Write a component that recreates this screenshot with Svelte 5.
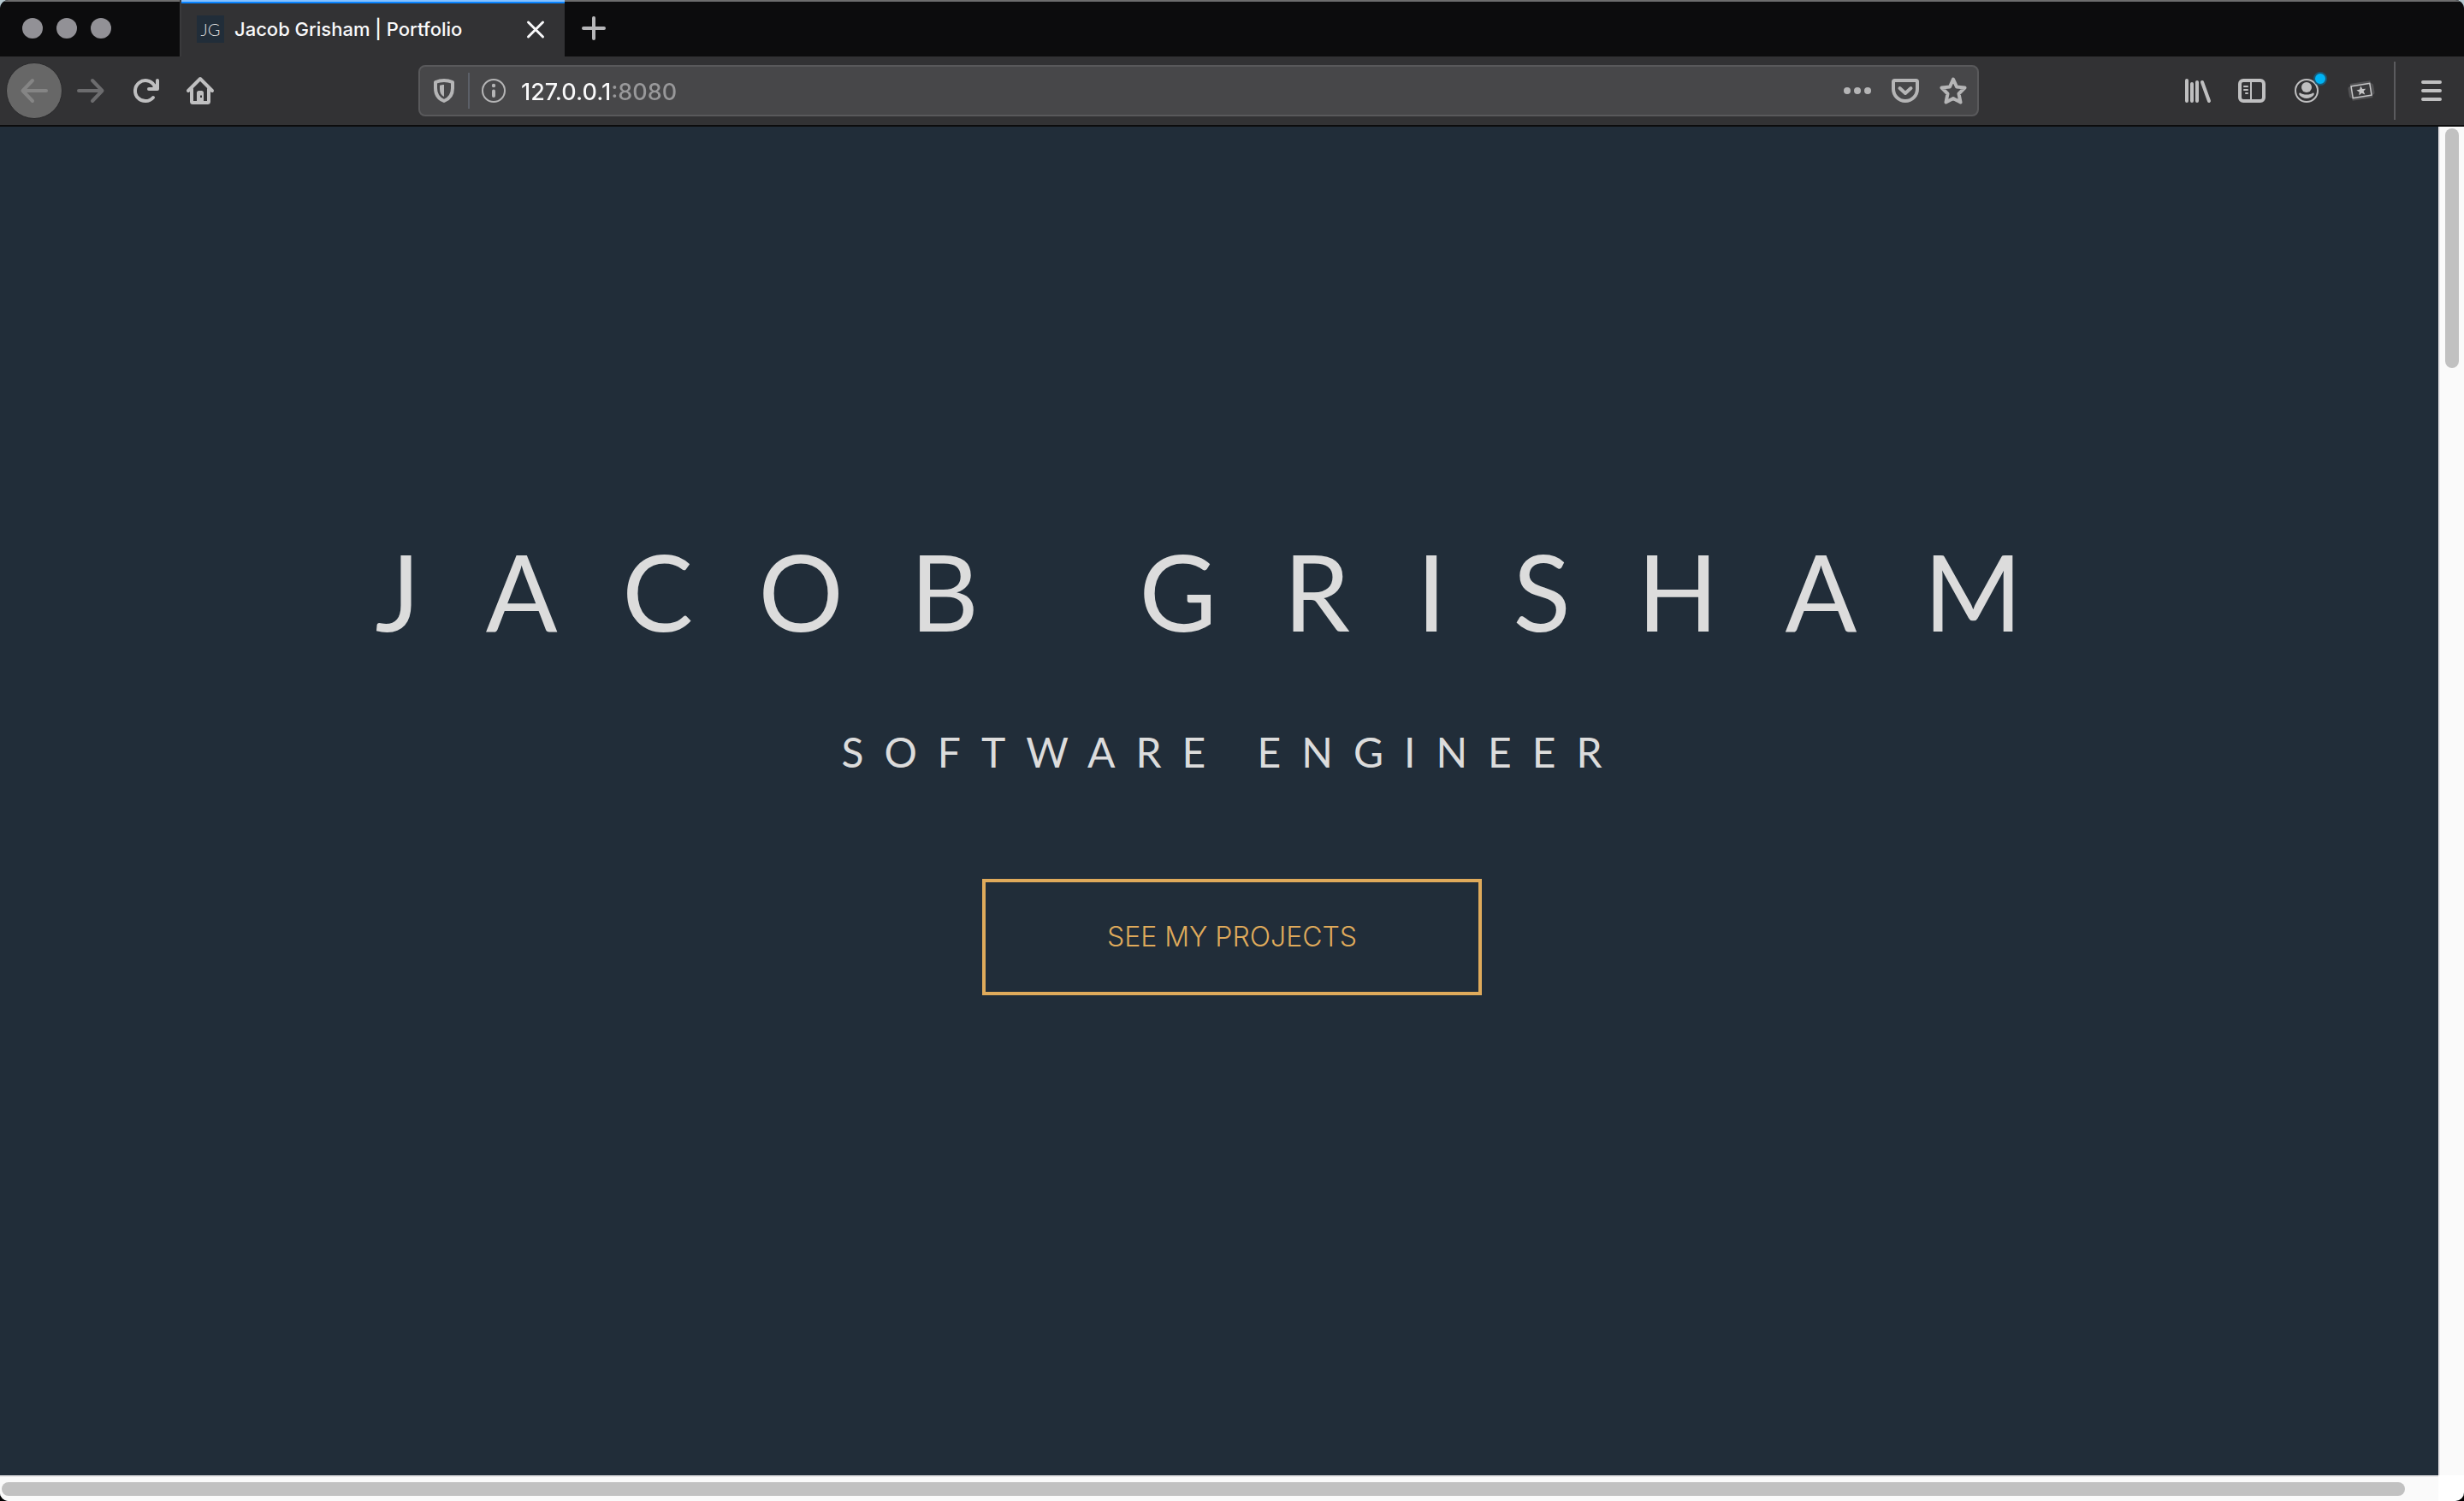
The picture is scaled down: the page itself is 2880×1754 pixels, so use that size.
<script>
  const address = '127.0.0.1:8080';
  const scrolled = { vertical: 17.8, horizontal: 98.7 };
</script>

<div class="window">
  <header class="tabs">
    <div class="lights">
      <button class="light" aria-label="Close window"></button>
      <button class="light" aria-label="Minimize window"></button>
      <button class="light" aria-label="Zoom window"></button>
    </div>
    <div class="tab">
      <span class="favicon">JG</span>
      <span class="tab-title">Jacob Grisham | Portfolio</span>
      <button class="tab-close" aria-label="Close tab">
        <svg class="icon" viewBox="0 0 32 32" fill="none" stroke="currentColor" stroke-width="3" stroke-linecap="round">
          <path d="M7.500 8 24.500 25M24.500 8 7.500 25" />
        </svg>
      </button>
    </div>
    <button class="new-tab" aria-label="New tab">
      <svg class="icon" viewBox="0 0 32 32" fill="none" stroke="currentColor" stroke-width="4" stroke-linecap="round">
        <path d="M16 4V28M4 16H28" />
      </svg>
    </button>
  </header>

  <nav class="toolbar" aria-label="Browser">
    <div class="group">
      <button class="tool back" aria-label="Back" disabled>
        <svg class="icon" viewBox="0 0 32 32" fill="none" stroke="currentColor" stroke-width="4" stroke-linecap="round" stroke-linejoin="round">
          <path d="M30 16H3M14 4 2.500 16 14 28" />
        </svg>
      </button>
      <button class="tool dim" aria-label="Forward" disabled>
        <svg class="icon" viewBox="0 0 32 32" fill="none" stroke="currentColor" stroke-width="4" stroke-linecap="round" stroke-linejoin="round">
          <path d="M2 16H29M18 4 29.500 16 18 28" />
        </svg>
      </button>
      <button class="tool" aria-label="Reload">
        <svg class="icon" viewBox="0 0 32 32" fill="none" stroke="currentColor" stroke-width="4" stroke-linecap="round" stroke-linejoin="round">
          <path d="M25 24A12 12 0 1 1 26 9.500" />
          <path d="M30 4V14H20" />
          <path d="M30 6 22 14H30Z" fill="currentColor" stroke="none" />
        </svg>
      </button>
      <button class="tool" aria-label="Home">
        <svg class="icon" viewBox="0 0 32 32" fill="none" stroke="currentColor" stroke-width="4" stroke-linecap="round" stroke-linejoin="round">
          <path d="M2 16 16 2 30 16" />
          <path d="M6 14V28.500Q6 30 7.500 30H24.500Q26 30 26 28.500V14" />
          <path d="M12 30V18.500Q12 16 14.500 16H17.500Q20 16 20 18.500V30ZM16 21.500V24H18V21.500Z" fill="currentColor" fill-rule="evenodd" stroke="none" />
        </svg>
      </button>
    </div>

    <div class="address">
      <button class="shield" aria-label="Tracking protection">
        <svg class="icon" viewBox="0 0 32 32" fill="none" stroke="currentColor" stroke-width="4" stroke-linejoin="round">
          <path d="M16 4C19 4 23 4.800 26 6V13C26 21 22.500 25.500 16 28C9.500 25.500 6 21 6 13V6C9 4.800 13 4 16 4Z" />
          <path d="M16 9C14 9 12.500 9.300 11 9.800V14C11 18.500 12.500 21.200 16 23Z" fill="currentColor" stroke="none" />
        </svg>
      </button>
      <span class="divider short"></span>
      <button class="info" aria-label="Site information">
        <svg class="icon" viewBox="0 0 32 32" fill="none" stroke="currentColor">
          <circle cx="16" cy="16" r="13" stroke-width="2" />
          <path d="M16 16.500V22" stroke-width="4" stroke-linecap="round" />
          <circle cx="16" cy="10" r="2.200" fill="currentColor" stroke="none" />
        </svg>
      </button>
      <input class="url" type="text" aria-label="Address" value={address} />
      <button class="action" aria-label="Page actions">
        <svg class="icon" viewBox="0 0 32 32" fill="currentColor">
          <circle cx="4" cy="16" r="4" /><circle cx="16" cy="16" r="4" /><circle cx="28" cy="16" r="4" />
        </svg>
      </button>
      <button class="action" aria-label="Save to Pocket">
        <svg class="icon" viewBox="0 0 32 32" fill="none" stroke="currentColor" stroke-width="4" stroke-linecap="round" stroke-linejoin="round">
          <path d="M3.500 4H28.500Q30 4 30 5.500V14A14 14 0 0 1 2 14V5.500Q2 4 3.500 4Z" />
          <path d="M9.500 13 16 19 22.500 13" />
        </svg>
      </button>
      <button class="action" aria-label="Bookmark this page">
        <svg class="icon" viewBox="0 0 32 32" fill="none" stroke="currentColor" stroke-width="4" stroke-linejoin="round">
          <path d="M16 2.500 20 11.500 29.500 12.500 22.500 19.500 24.500 29.500 16 25 7.500 29.500 9.500 19.500 2.500 12.500 12 11.500Z" />
        </svg>
      </button>
    </div>

    <div class="group">
      <button class="tool" aria-label="Library">
        <svg class="icon" viewBox="0 0 32 32" fill="none" stroke="currentColor" stroke-width="4" stroke-linecap="round">
          <path d="M4 4V28M10 8V28M16 6V28M22 6 30 28" />
        </svg>
      </button>
      <button class="tool" aria-label="Sidebars">
        <svg class="icon" viewBox="0 0 32 32" fill="none" stroke="currentColor">
          <rect x="2" y="4" width="28" height="24" rx="4" stroke-width="4" />
          <path d="M15 5V27" stroke-width="2" />
          <path d="M7 11H11M7 15H11M9 19H11" stroke-width="2" stroke-linecap="round" />
        </svg>
      </button>
      <button class="tool" aria-label="Account">
        <svg class="icon" viewBox="0 0 32 32" fill="currentColor">
          <circle cx="16" cy="16" r="13" fill="none" stroke="currentColor" stroke-width="2" />
          <circle cx="16" cy="12" r="6" />
          <path d="M8.500 18.500C10.500 20 13 20.500 16 20.500S21.500 20 23.500 18.500C25 18.300 25.200 20 24 21.500A11 11 0 0 1 8 21.500C6.800 20 7 18.300 8.500 18.500Z" />
        </svg>
        <span class="badge"></span>
      </button>
      <button class="tool" aria-label="Tickets">
        <svg class="icon" viewBox="0 0 32 32">
          <g transform="rotate(-9 16 16)">
            <path d="M4 6H28V9Q31 9 31 12V20Q31 23 28 23V26H4V23Q1 23 1 20V12Q1 9 4 9Z" fill="#515153" />
            <rect x="5" y="9" width="22" height="14" fill="#3a3a3c" stroke="#c6c6c7" stroke-width="1.500" />
            <path d="M16 10.500 17.600 14.300 21.500 14.500 18.500 17 19.500 21 16 18.800 12.500 21 13.500 17 10.500 14.500 14.400 14.300Z" fill="#c6c6c7" />
          </g>
        </svg>
      </button>
      <span class="divider tall"></span>
      <button class="tool" aria-label="Open menu">
        <svg class="icon" viewBox="0 0 32 32" fill="none" stroke="currentColor" stroke-width="4" stroke-linecap="round">
          <path d="M6 6H26M6 16H26M6 26H26" />
        </svg>
      </button>
    </div>
  </nav>

  <div class="viewport">
    <main class="page">
      <div class="hero">
        <h1>JACOB GRISHAM</h1>
        <h2>SOFTWARE ENGINEER</h2>
        <a class="cta" href="#projects">SEE MY PROJECTS</a>
      </div>
    </main>
    <div class="track vertical"><div class="thumb" style="height: {scrolled.vertical}%"></div></div>
    <div class="track horizontal"><div class="thumb" style="width: {scrolled.horizontal}%"></div></div>
    <div class="corner"></div>
  </div>
</div>

<style>
  :global(body) {
    background: linear-gradient(#b5c8cf 50%, #000 50%);
  }

  .window {
    display: flex;
    flex-direction: column;
    min-height: 100vh;
    overflow: hidden;
    border-radius: 10px;
    background: #212d39;
    font-family: Inter, 'Liberation Sans', sans-serif;
  }

  button {
    display: flex;
    align-items: center;
    justify-content: center;
    flex: none;
    margin: 0;
    padding: 0;
    border: 0;
    background: none;
    color: inherit;
  }

  .icon {
    display: block;
    width: 32px;
    height: 32px;
    overflow: visible;
  }

  .tabs {
    display: flex;
    height: 66px;
    box-sizing: border-box;
    background: #0c0c0d;
    box-shadow: inset 0 2px #6d6d6d;
  }

  .lights {
    display: flex;
    align-items: center;
    gap: 16px;
    width: 210px;
    padding-left: 26px;
    box-sizing: border-box;
  }

  .light {
    width: 24px;
    height: 24px;
    border-radius: 50%;
    background: #929196;
  }

  .tab {
    display: flex;
    align-items: center;
    width: 450px;
    padding: 2px 18px 0 18px;
    box-sizing: border-box;
    border-left: 2px solid #3a3a3c;
    background: linear-gradient(#86c1ff 2px, #0a84ff 2px 4px, #323234 4px);
    color: #f9f9fa;
  }

  .favicon {
    width: 32px;
    margin-right: 12px;
    background: #212d39;
    color: #dcdcdc;
    font: 300 20px/32px Lato, sans-serif;
    text-align: center;
  }

  .tab-title {
    flex: 1;
    font-size: 22px;
    font-weight: 500;
    line-height: 32px;
    white-space: nowrap;
  }

  .new-tab {
    width: 68px;
    color: #b6b6b8;
  }

  .toolbar {
    display: grid;
    grid-template-columns: auto 11fr 90fr 11fr auto;
    align-items: center;
    height: 82px;
    padding: 0 6px 0 7px;
    box-sizing: border-box;
    border-bottom: 2px solid #0c0c0d;
    background: #323234;
    color: #bfbfc0;
  }

  .group {
    display: flex;
    align-items: center;
  }

  .group:last-child {
    grid-column: 5;
  }

  .tool {
    position: relative;
    width: 64px;
    height: 64px;
  }

  .back {
    width: 66px;
    height: 66px;
    margin-right: 1px;
    border: 1px solid #2a2a2c;
    border-radius: 50%;
    background: #676767;
    color: #858585;
  }

  .dim {
    color: #6c6c6e;
  }

  .badge {
    position: absolute;
    top: 10px;
    right: 8px;
    width: 12px;
    height: 12px;
    border: 2px solid #1b5874;
    border-radius: 50%;
    background: #00b3f4;
  }

  .divider {
    flex: none;
    width: 2px;
    background: #5b5b5e;
  }

  .divider.short {
    height: 42px;
    background: #5c6068;
  }

  .divider.tall {
    height: 68px;
    margin: 0 10px 0 6px;
  }

  .address {
    display: flex;
    grid-column: 3;
    align-items: center;
    height: 60px;
    box-sizing: border-box;
    border: 2px solid #59595b;
    border-radius: 8px;
    background: #474749;
    color: #b5b5b6;
  }

  .shield {
    width: 56px;
  }

  .info {
    width: 56px;
  }

  .url {
    flex: 1;
    min-width: 0;
    height: 40px;
    padding: 2px 0 0 4px;
    border: 0;
    outline: 0;
    background: linear-gradient(90deg, #f9f9fa 109px, #98989a 109px);
    -webkit-background-clip: text;
    background-clip: text;
    color: transparent;
    font: 500 27px/38px Inter, 'Liberation Sans', sans-serif;
  }

  .action {
    width: 56px;
    height: 56px;
  }

  .viewport {
    display: grid;
    flex: 1;
    grid-template-columns: 1fr 30px;
    grid-template-rows: 1fr 30px;
    background: #fff;
  }

  .page {
    display: flex;
    min-width: 0;
    overflow: hidden;
    background: #212d39;
    color: #dcdcdc;
  }

  .hero {
    display: flex;
    flex: none;
    flex-direction: column;
    align-items: center;
    justify-content: center;
    width: 100vw;
    padding-bottom: 100px;
    box-sizing: border-box;
  }

  h1,
  h2 {
    margin: 0;
    font-family: Lato, 'Open Sans', sans-serif;
    font-weight: 400;
    white-space: nowrap;
  }

  h1 {
    font-size: 124px;
    line-height: 160px;
    letter-spacing: 78px;
  }

  h2 {
    margin: 79px 0 118px;
    font-size: 48px;
    line-height: 60px;
    letter-spacing: 24px;
  }

  .cta {
    width: 584px;
    box-sizing: border-box;
    border: 4px solid #dfaa5b;
    color: #dfaa5b;
    font-size: 32px;
    font-weight: 300;
    line-height: 128px;
    text-align: center;
    text-decoration: none;
  }

  .track {
    box-sizing: border-box;
    background: #fafafa;
  }

  .vertical {
    padding: 2px 6px;
    border-left: 2px solid #e9e7e9;
  }

  .horizontal {
    padding: 6px 2px;
    border-top: 2px solid #e9e7e9;
  }

  .thumb {
    border-radius: 8px;
    background: #c1c1c1;
  }

  .horizontal .thumb {
    height: 16px;
  }
</style>
